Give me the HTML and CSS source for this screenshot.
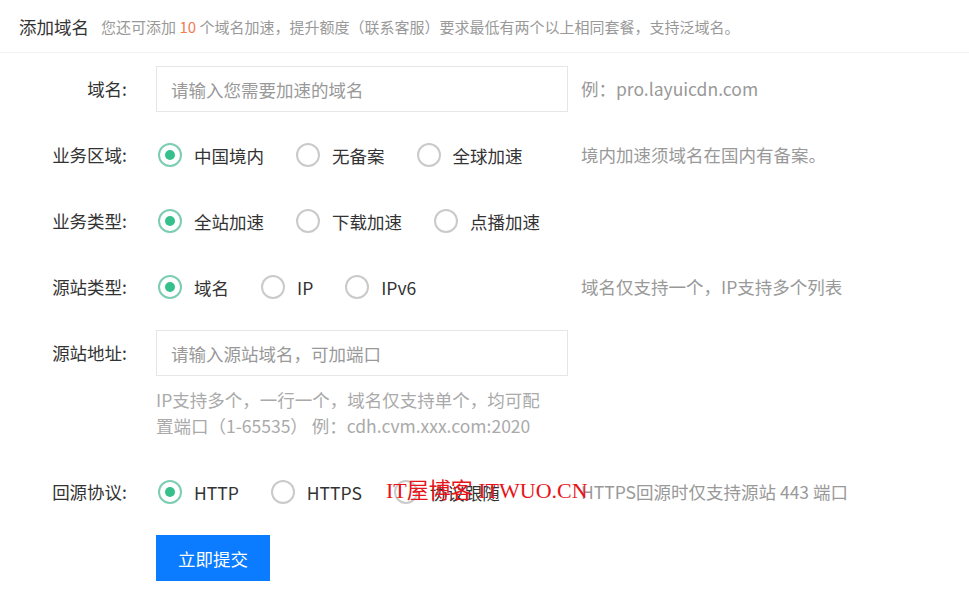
FILE: index.html
```html
<!DOCTYPE html>
<html lang="zh-CN">
<head>
  <meta charset="UTF-8" />
  <title>添加域名</title>
  <link rel="stylesheet" href="styles.css">
</head>
<body>
  <div class="header">
    <h2>添加域名</h2>
    <span class="tip">您还可添加 <span class="num">10</span> 个域名加速，提升额度（联系客服）要求最低有两个以上相同套餐，支持泛域名。</span>
  </div>

  <form class="form">
    <div class="form-item">
      <label class="form-label">域名:</label>
      <div class="form-block">
        <input class="form-input" type="text" placeholder="请输入您需要加速的域名" />
      </div>
      <div class="form-mid">例：pro.layuicdn.com</div>
    </div>

    <div class="form-item">
      <label class="form-label">业务区域:</label>
      <div class="form-block radios">
        <label class="radio"><input type="radio" name="area" checked />中国境内</label>
        <label class="radio"><input type="radio" name="area" />无备案</label>
        <label class="radio"><input type="radio" name="area" />全球加速</label>
      </div>
      <div class="form-mid">境内加速须域名在国内有备案。</div>
    </div>

    <div class="form-item">
      <label class="form-label">业务类型:</label>
      <div class="form-block radios">
        <label class="radio"><input type="radio" name="type" checked />全站加速</label>
        <label class="radio"><input type="radio" name="type" />下载加速</label>
        <label class="radio"><input type="radio" name="type" />点播加速</label>
      </div>
    </div>

    <div class="form-item">
      <label class="form-label">源站类型:</label>
      <div class="form-block radios">
        <label class="radio"><input type="radio" name="origin" checked />域名</label>
        <label class="radio"><input type="radio" name="origin" />IP</label>
        <label class="radio"><input type="radio" name="origin" />IPv6</label>
      </div>
      <div class="form-mid">域名仅支持一个，IP支持多个列表</div>
    </div>

    <div class="form-item item-addr">
      <label class="form-label">源站地址:</label>
      <div class="form-block">
        <input class="form-input" type="text" placeholder="请输入源站域名，可加端口" />
        <div class="form-help">IP支持多个，一行一个，域名仅支持单个，均可配置端口（1-65535） 例：cdh.cvm.xxx.com:2020</div>
      </div>
    </div>

    <div class="form-item">
      <label class="form-label">回源协议:</label>
      <div class="form-block radios">
        <label class="radio"><input type="radio" name="proto" checked />HTTP</label>
        <label class="radio"><input type="radio" name="proto" />HTTPS</label>
        <label class="radio"><input type="radio" name="proto" />协议跟随</label>
      </div>
      <div class="form-mid">HTTPS回源时仅支持源站 443 端口</div>
    </div>

    <div class="form-actions">
      <button type="button" class="btn">立即提交</button>
    </div>
  </form>

  <div class="watermark">IT屋博客 ITWUO.CN</div>
</body>
</html>
```

FILE: styles.css
```css
/*
  ---------------------
  GLOBAL STYLES
  ---------------------
*/
* {
  margin: 0;
  padding: 0;
  box-sizing: border-box;
}

body {
  position: relative;
  background: #fff;
  font-family: "Noto Sans CJK SC", "Noto Sans", sans-serif;
  font-size: 17.5px;
  color: #333;
}

/*
  ---------------------
  HEADER
  ---------------------
*/
.header {
  height: 53px;
  display: flex;
  align-items: center;
  gap: 12px;
  padding: 0 19px;
  border-bottom: 1px solid #f2f2f2;
}

.header h2 {
  font-size: 17.5px;
  font-weight: normal;
  color: #333;
}

.header .tip {
  font-size: 15px;
  color: #999;
}

.header .num {
  color: #f47a4f;
}

/*
  ---------------------
  FORM
  ---------------------
*/
.form {
  padding-top: 13px;
}

.form-item {
  display: flex;
  align-items: flex-start;
  margin-bottom: 20px;
}

.form-label {
  flex-shrink: 0;
  width: 127px;
  height: 46px;
  line-height: 46px;
  margin-right: 29px;
  text-align: right;
  color: #333;
}

.form-block {
  flex-shrink: 0;
  width: 412px;
}

.form-input {
  width: 100%;
  height: 46px;
  padding: 0 14px;
  border: 1px solid #e6e6e6;
  outline: none;
  font-family: inherit;
  font-size: 17.5px;
  color: #333;
}

.form-input::placeholder {
  color: #999;
}

.form-mid {
  margin-left: 13px;
  line-height: 46px;
  color: #999;
  white-space: nowrap;
}

.form-help {
  width: 395px;
  margin-top: 11px;
  line-height: 26px;
  color: #aaa;
}

.item-addr {
  margin-bottom: 30px;
}

/*
  ---------------------
  RADIOS
  ---------------------
*/
.radios {
  display: flex;
  align-items: center;
  height: 46px;
}

.radio {
  flex-shrink: 0;
  display: flex;
  align-items: center;
  gap: 12px;
  margin-right: 30px;
  color: #333;
  white-space: nowrap;
  cursor: pointer;
}

.radio input[type="radio"] {
  -webkit-appearance: none;
  appearance: none;
  flex-shrink: 0;
  position: relative;
  width: 24px;
  height: 24px;
  margin: 0 0 0 2px;
  border: 2px solid #cacaca;
  border-radius: 50%;
  background: #fff;
  cursor: pointer;
}

.radio input[type="radio"]:checked {
  border-color: #7ccdb1;
}

.radio input[type="radio"]:checked::after {
  content: '';
  position: absolute;
  top: 5px;
  left: 5px;
  width: 10px;
  height: 10px;
  border-radius: 50%;
  background: #36c08c;
}

/*
  ---------------------
  BUTTON
  ---------------------
*/
.form-actions {
  padding-left: 156px;
}

.btn {
  height: 46px;
  padding: 0 22px;
  border: none;
  background: #0b7cff;
  color: #fff;
  font-family: inherit;
  font-size: 17.5px;
  cursor: pointer;
}

/* watermark laid over the protocol row */
.watermark {
  position: absolute;
  left: 386px;
  top: 480px;
  font-family: "Liberation Serif", "Noto Sans CJK SC", serif;
  font-size: 22px;
  line-height: 1;
  color: #e8141b;
  white-space: nowrap;
  pointer-events: none;
}
```
